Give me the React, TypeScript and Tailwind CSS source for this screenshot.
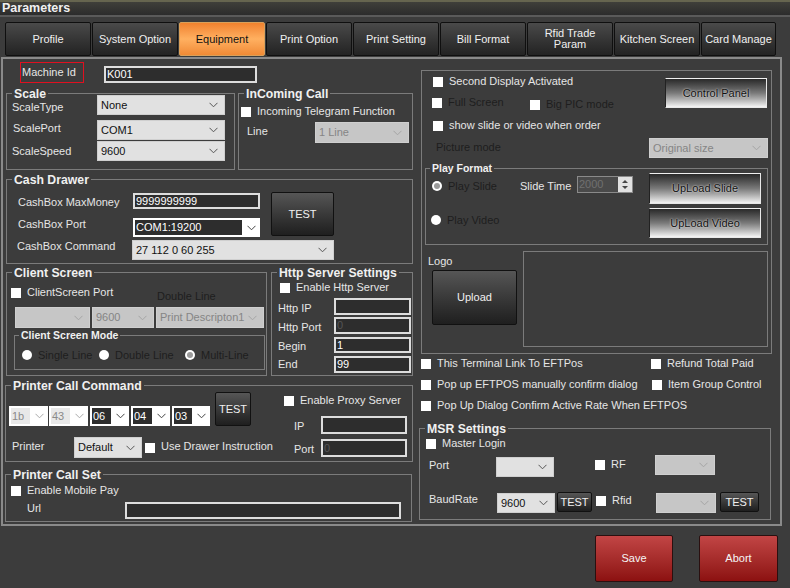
import React from 'react';

function Chevron({ color }: { color: string }) {
  return (
    <svg width="9" height="6" viewBox="0 0 9 6" fill="none" className="shrink-0">
      <path d="M0.5 0.8 L4.5 4.8 L8.5 0.8" stroke={color} strokeWidth="1" />
    </svg>
  );
}

// combo box, grey when enabled and paler when the form has it switched off
function Select({ value, className, disabled }: { value?: string; className: string; disabled?: boolean }) {
  return (
    <div
      className={`flex items-center justify-between shrink-0 pl-[3px] pr-[6px] border border-[#cfcfcf] ${
        disabled ? 'bg-[#c6c6c6] text-[#858585] border-[#c9c9c9]' : 'bg-[#e1e1e1] text-[#111111]'
      } ${className}`}
    >
      <span className="whitespace-nowrap">{value}</span>
      <Chevron color={disabled ? '#a5a5a5' : '#555555'} />
    </div>
  );
}

function Input({ value, className, faded }: { value?: string; className: string; faded?: boolean }) {
  return (
    <div
      className={`flex items-center shrink-0 pl-[1px] border-2 border-[#dddddd] bg-[#2d2d2d] leading-none ${
        faded ? 'text-[#555555]' : 'text-white'
      } ${className}`}
    >
      {value}
    </div>
  );
}

// white combo with a dark edit part, used for port and hex bytes
function EditCombo({ value, className, disabled }: { value: string; className: string; disabled?: boolean }) {
  return (
    <div className={`flex items-center justify-between shrink-0 bg-white pl-[2px] pr-[4px] py-[2px] ${className}`}>
      <div
        className={`flex items-center h-full flex-1 pl-[1px] mr-[5px] leading-none ${
          disabled ? 'bg-[#e8e8e8] text-[#8a8a8a]' : 'bg-[#2d2d2d] text-white'
        }`}
      >
        {value}
      </div>
      <Chevron color={disabled ? '#aaaaaa' : '#444444'} />
    </div>
  );
}

function Check({ label, className, dim }: { label?: string; className?: string; dim?: boolean }) {
  return (
    <div className={`flex items-center h-[10px] shrink-0 ${className ?? ''}`}>
      <div className="w-[10px] h-[10px] bg-white shrink-0" />
      {label && <span className={`ml-[6px] pb-[2px] whitespace-nowrap ${dim ? 'text-[#1e1e1e]' : 'text-[#e6e6e6]'}`}>{label}</span>}
    </div>
  );
}

function Radio({ label, className, selected }: { label: string; className?: string; selected?: boolean }) {
  return (
    <div className={`flex items-center shrink-0 ${className ?? ''}`}>
      <div className="w-[10px] h-[10px] rounded-full bg-white flex items-center justify-center shrink-0">
        {selected && <div className="w-[6px] h-[6px] rounded-full bg-[#9a9a9a]" />}
      </div>
      <span className="ml-[6px] whitespace-nowrap text-[#1e1e1e]">{label}</span>
    </div>
  );
}

function Group({ title, className, small, children }: { title?: string; className: string; small?: boolean; children: React.ReactNode }) {
  return (
    <div className={`relative shrink-0 border border-[#7b7b7b] ${className}`}>
      {title && (
        <div
          className={`absolute px-[2px] bg-[#3c3c3c] font-bold text-[#f0f0f0] whitespace-nowrap leading-none ${
            small ? 'left-[4px] -top-[6px] text-[10.5px]' : 'left-[5px] -top-[6px] text-[12.25px]'
          }`}
        >
          {title}
        </div>
      )}
      {children}
    </div>
  );
}

function DarkButton({ label, className }: { label: string; className: string }) {
  return (
    <div
      className={`flex items-center justify-center shrink-0 rounded-[2px] border border-[#111111] bg-gradient-to-b from-[#565656] to-[#1f1f1f] text-[#f0f0f0] ${className}`}
    >
      {label}
    </div>
  );
}

function ShinyButton({ label, className }: { label: string; className: string }) {
  return (
    <div
      className={`flex items-center justify-center shrink-0 border border-[#e8e8e8] border-l-[#222222] border-t-[#f0f0f0] bg-gradient-to-b from-[#2a2a2a] via-[#7a7a7a] to-[#f4f4f4] text-[#111111] ${className}`}
    >
      <span className="[text-shadow:0_0_2px_#ffffff]">{label}</span>
    </div>
  );
}

const tabs = ['Profile', 'System Option', 'Equipment', 'Print Option', 'Print Setting', 'Bill Format', 'Rfid Trade Param', 'Kitchen Screen', 'Card Manage'];

export default function App() {
  return (
    <div className="w-[790px] h-[588px] overflow-hidden bg-[#3c3c3c] text-[#e6e6e6] text-[11px] leading-[13px] font-['Liberation_Sans',sans-serif]">
      {/* title bar */}
      <div className="h-[17px] pl-[2px] flex items-center border-t-2 border-t-[#66654f] border-b-2 border-b-[#5a5a5a] bg-gradient-to-b from-[#3f3f3a] to-[#2c2c2c]">
        <span className="font-bold text-[12.5px] text-[#f0f0f0]">Parameters</span>
      </div>

      {/* tab strip */}
      <div className="flex gap-[1px] pl-[5px] mt-[5px] h-[34px]">
        {tabs.map((t, i) => (
          <div
            key={t}
            className={`flex items-center justify-center text-center leading-[11px] rounded-[2px] border ${
              i === 8 ? 'w-[75px]' : 'w-[86px]'
            } ${
              i === 2
                ? 'border-[#d9a05a] bg-gradient-to-b from-[#f0812d] via-[#ffb060] to-[#f08a35] text-[#111111]'
                : 'border-[#0f0f0f] bg-gradient-to-b from-[#4a4a4a] to-[#232323] text-[#f0f0f0]'
            }`}
          >
            {t === 'Rfid Trade Param' ? (
              <span>
                Rfid Trade
                <br />
                Param
              </span>
            ) : (
              t
            )}
          </div>
        ))}
      </div>

      {/* main panel */}
      <div className="flex w-[781px] h-[469px] ml-[1px] mt-[1px] pl-[2px] border-2 border-[#8a8a8a]">
        {/* left column */}
        <div className="w-[409px] shrink-0">
          <div className="flex mt-[3px] h-[21px] ml-[15px]">
            <div className="w-[64px] h-[21px] border border-[#e01020] flex items-center pl-[1px] text-[#e6e6e6]">Machine Id</div>
            <Input value="K001" className="w-[153px] h-[17px] ml-[20px] mt-[4px]" />
          </div>

          <div className="flex mt-[10px] ml-[1px]">
            <Group title="Scale" className="w-[229px] h-[77px]">
              <div className="pt-[1px] pl-[5px]">
                <div className="flex items-center">
                  <span className="w-[85px] pt-[4px]">ScaleType</span>
                  <Select value="None" className="w-[128px] h-[20px]" />
                </div>
                <div className="flex items-center mt-[5px]">
                  <span className="w-[85px] -mt-[4px] pl-[1px]">ScalePort</span>
                  <Select value="COM1" className="w-[128px] h-[20px]" />
                </div>
                <div className="flex items-center mt-[1px]">
                  <span className="w-[85px]">ScaleSpeed</span>
                  <Select value="9600" className="w-[128px] h-[20px]" />
                </div>
              </div>
            </Group>
            <Group title="InComing Call" className="w-[175px] h-[77px] ml-[3px]">
              <Check label="Incoming Telegram Function" className="mt-[13px] ml-[2px]" />
              <div className="flex items-center mt-[5px] ml-[8px]">
                <span className="w-[68px] -mt-[2px]">Line</span>
                <Select value="1 Line" disabled className="w-[94px] h-[21px]" />
              </div>
            </Group>
          </div>

          <Group title="Cash Drawer" className="w-[407px] h-[85px] mt-[9px] ml-[1px]">
            <div className="flex pt-[12px] pl-[11px]">
              <div className="w-[242px]">
                <div className="flex items-center mt-[1px]">
                  <span className="w-[115px] pt-[2px]">CashBox MaxMoney</span>
                  <Input value="9999999999" className="w-[127px] h-[16px]" />
                </div>
                <div className="flex items-center mt-[9px]">
                  <span className="w-[115px] -mt-[6px]">CashBox Port</span>
                  <EditCombo value="COM1:19200" className="w-[127px] h-[19px]" />
                </div>
              </div>
              <DarkButton label="TEST" className="w-[63px] h-[44px] ml-[11px]" />
            </div>
            <div className="flex items-center mt-[3px] pl-[10px]">
              <span className="w-[115px] -mt-[8px]">CashBox Command</span>
              <Select value="27 112 0 60 255" className="w-[202px] h-[20px]" />
            </div>
          </Group>

          <div className="flex mt-[8px] ml-[1px]">
            <Group title="Client Screen" className="w-[261px] h-[104px]">
              <div className="flex h-[19px] mt-[15px] pl-[4px]">
                <div className="w-[146px]">
                  <Check label="ClientScreen Port" />
                </div>
                <span className="text-[#1e1e1e] mt-[1px] leading-[14px]">Double Line</span>
              </div>
              <div className="flex gap-[2px] ml-[8px]">
                <Select disabled className="w-[75px] h-[21px]" />
                <Select value="9600" disabled className="w-[62px] h-[21px]" />
                <Select value="Print Descripton1" disabled className="w-[108px] h-[21px]" />
              </div>
              <Group title="Client Screen Mode" small className="w-[251px] h-[35px] mt-[7px] ml-[7px]">
                <div className="flex h-[10px] mt-[14px] ml-[7px]">
                  <Radio label="Single Line" className="w-[77px]" />
                  <Radio label="Double Line" className="w-[86px]" />
                  <Radio label="Multi-Line" selected />
                </div>
              </Group>
            </Group>
            <Group title="Http Server Settings" className="w-[142px] h-[104px] ml-[4px]">
              <Check label="Enable Http Server" className="mt-[10px] ml-[8px]" />
              <div className="flex items-center mt-[5px] ml-[6px]">
                <span className="w-[56px] pt-[4px]">Http IP</span>
                <Input className="w-[77px] h-[17px]" />
              </div>
              <div className="flex items-center mt-[2px] ml-[6px]">
                <span className="w-[56px] pt-[4px]">Http Port</span>
                <Input value="0" faded className="w-[77px] h-[17px]" />
              </div>
              <div className="flex items-center mt-[3px] ml-[6px]">
                <span className="w-[56px] pt-[2px]">Begin</span>
                <Input value="1" className="w-[77px] h-[16px]" />
              </div>
              <div className="flex items-center mt-[3px] ml-[6px]">
                <span className="w-[56px]">End</span>
                <Input value="99" className="w-[77px] h-[17px]" />
              </div>
            </Group>
          </div>

          <Group title="Printer Call Command" className="w-[408px] h-[77px] mt-[9px]">
            <div className="flex">
              <div className="w-[278px] shrink-0">
                <div className="flex items-end mt-[6px] ml-[3px] h-[34px]">
                  <EditCombo value="1b" disabled className="w-[39px] h-[20px]" />
                  <EditCombo value="43" disabled className="w-[39px] h-[20px] ml-[1px]" />
                  <EditCombo value="06" className="w-[39px] h-[20px] ml-[2px]" />
                  <EditCombo value="04" className="w-[39px] h-[20px] ml-[2px]" />
                  <EditCombo value="03" className="w-[38px] h-[20px] ml-[2px]" />
                  <DarkButton label="TEST" className="w-[36px] h-[34px] ml-[5px]" />
                </div>
                <div className="flex items-center mt-[11px] ml-[6px]">
                  <span className="w-[62px] -mt-[2px]">Printer</span>
                  <Select value="Default" className="w-[68px] h-[21px]" />
                  <Check label="Use Drawer Instruction" className="ml-[3px]" />
                </div>
              </div>
              <div>
                <Check label="Enable Proxy Server" className="mt-[10px]" />
                <div className="flex items-center mt-[10px] ml-[10px]">
                  <span className="w-[27px] pt-[2px]">IP</span>
                  <Input className="w-[86px] h-[18px]" />
                </div>
                <div className="flex items-center mt-[5px] ml-[10px]">
                  <span className="w-[27px] pt-[2px]">Port</span>
                  <Input value="0" faded className="w-[86px] h-[18px]" />
                </div>
              </div>
            </div>
          </Group>

          <Group title="Printer Call Set" className="w-[407px] h-[48px] mt-[12px]">
            <Check label="Enable Mobile Pay" className="mt-[11px] ml-[5px]" />
            <div className="flex items-center mt-[6px] ml-[21px]">
              <span className="w-[98px] -mt-[4px]">Url</span>
              <Input className="w-[276px] h-[17px]" />
            </div>
          </Group>
        </div>

        {/* right column */}
        <div className="w-[353px] shrink-0 ml-[5px]">
          <Group className="w-[351px] h-[284px] mt-[11px] ml-[2px]">
            <div className="flex h-[67px]">
              <div className="w-[243px] pl-[11px] pt-[6px]">
                <Check label="Second Display Activated" />
                <div className="flex mt-[11px]">
                  <Check label="Full Screen" dim className="w-[98px] -ml-[1px]" />
                  <Check label="Big PIC mode" dim className="mt-[2px]" />
                </div>
                <Check label="show slide or video when order" className="mt-[11px]" />
              </div>
              <ShinyButton label="Control Panel" className="w-[102px] h-[30px] mt-[7px]" />
            </div>
            <div className="flex items-center ml-[14px]">
              <span className="w-[213px] -mt-[2px] text-[#1e1e1e]">Picture mode</span>
              <Select value="Original size" disabled className="w-[119px] h-[20px]" />
            </div>
            <Group title="Play Format" small className="w-[343px] h-[77px] mt-[10px] ml-[3px]">
              <div className="flex">
                <div className="w-[223px] shrink-0">
                  <div className="flex items-center h-[20px] mt-[7px] ml-[6px]">
                    <Radio label="Play Slide" selected className="w-[88px]" />
                    <span className="w-[57px]">Slide Time</span>
                    <div className="flex w-[56px] h-[17px] self-start border border-[#8a8a8a] bg-[#4a4a4a]">
                      <span className="flex-1 pl-[1px] text-[#707070] leading-[14px]">2000</span>
                      <div className="w-[14px] bg-[#e1e1e1] flex flex-col items-center justify-center gap-[3px]">
                        <div className="w-0 h-0 border-x-[3px] border-x-transparent border-b-[3px] border-b-[#444444]" />
                        <div className="w-0 h-0 border-x-[3px] border-x-transparent border-t-[3px] border-t-[#444444]" />
                      </div>
                    </div>
                  </div>
                  <Radio label="Play Video" className="h-[10px] mt-[19px] ml-[5px]" />
                </div>
                <div>
                  <ShinyButton label="UpLoad Slide" className="w-[112px] h-[31px] mt-[4px]" />
                  <ShinyButton label="UpLoad Video" className="w-[112px] h-[30px] mt-[4px]" />
                </div>
              </div>
            </Group>
            <div className="flex mt-[6px]">
              <div className="w-[101px] shrink-0">
                <div className="mt-[3px] ml-[6px] h-[14px] leading-[14px]">Logo</div>
                <DarkButton label="Upload" className="w-[85px] h-[55px] mt-[2px] ml-[10px]" />
              </div>
              <div className="w-[245px] h-[96px] border border-[#7b7b7b]" />
            </div>
          </Group>

          <div className="ml-[2px] mt-[5px]">
            <div className="flex">
              <Check label="This Terminal Link To EFTPos" className="w-[230px]" />
              <Check label="Refund Total Paid" />
            </div>
            <div className="flex mt-[11px]">
              <Check label="Pop up EFTPOS manually confirm dialog" className="w-[231px]" />
              <Check label="Item Group Control" />
            </div>
            <Check label="Pop Up Dialog Confirm Active Rate When EFTPOS" className="mt-[11px]" />
          </div>

          <Group title="MSR Settings" className="w-[352px] h-[92px] mt-[17px]">
            <Check label="Master Login" className="mt-[10px] ml-[6px]" />
            <div className="flex items-start mt-[6px] ml-[9px]">
              <span className="w-[67px] mt-[4px]">Port</span>
              <Select className="w-[58px] h-[20px] mt-[2px]" />
              <Check label="RF" className="w-[60px] ml-[41px] mt-[5px]" />
              <Select disabled className="w-[60px] h-[20px]" />
            </div>
            <div className="flex items-start mt-[15px] ml-[9px]">
              <span className="w-[68px] mt-[1px]">BaudRate</span>
              <Select value="9600" className="w-[58px] h-[20px] mt-[1px]" />
              <DarkButton label="TEST" className="w-[35px] h-[20px] ml-[2px]" />
              <Check label="Rfid" className="w-[60px] ml-[4px] mt-[4px]" />
              <Select disabled className="w-[60px] h-[20px] mt-[1px]" />
              <DarkButton label="TEST" className="w-[39px] h-[20px] ml-[4px]" />
            </div>
          </Group>
        </div>
      </div>

      {/* footer buttons */}
      <div className="flex justify-end gap-[26px] mt-[9px] pr-[12px]">
        <div className="flex items-center justify-center w-[78px] h-[47px] rounded-[2px] border border-[#2a1010] bg-gradient-to-b from-[#c24545] to-[#8c1010] text-[#f5f5f5]">Save</div>
        <div className="flex items-center justify-center w-[79px] h-[47px] rounded-[2px] border border-[#2a1010] bg-gradient-to-b from-[#c24545] to-[#8c1010] text-[#f5f5f5]">Abort</div>
      </div>
    </div>
  );
}
